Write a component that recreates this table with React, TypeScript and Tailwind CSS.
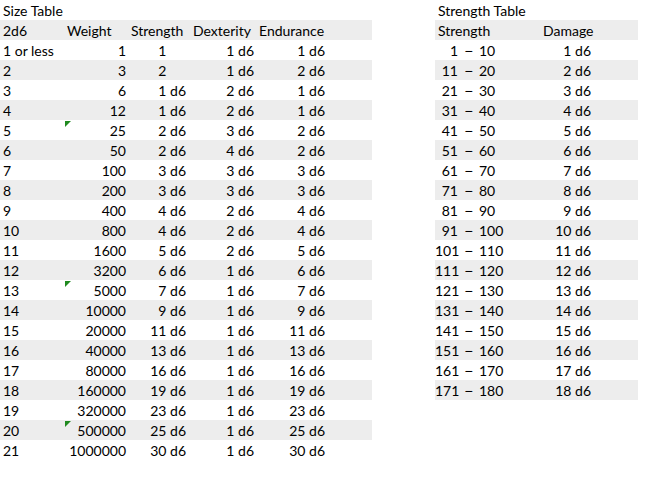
import React from 'react';

type SizeRow = {
  roll: string;
  weight: string;
  strength: string;
  dexterity: string;
  endurance: string;
  flagged?: boolean;
  bareStrength?: boolean;
};

const sizeRows: SizeRow[] = [
  { roll: '1 or less', weight: '1', strength: '1', dexterity: '1', endurance: '1', bareStrength: true },
  { roll: '2', weight: '3', strength: '2', dexterity: '1', endurance: '2', bareStrength: true },
  { roll: '3', weight: '6', strength: '1', dexterity: '2', endurance: '1' },
  { roll: '4', weight: '12', strength: '1', dexterity: '2', endurance: '1' },
  { roll: '5', weight: '25', strength: '2', dexterity: '3', endurance: '2', flagged: true },
  { roll: '6', weight: '50', strength: '2', dexterity: '4', endurance: '2' },
  { roll: '7', weight: '100', strength: '3', dexterity: '3', endurance: '3' },
  { roll: '8', weight: '200', strength: '3', dexterity: '3', endurance: '3' },
  { roll: '9', weight: '400', strength: '4', dexterity: '2', endurance: '4' },
  { roll: '10', weight: '800', strength: '4', dexterity: '2', endurance: '4' },
  { roll: '11', weight: '1600', strength: '5', dexterity: '2', endurance: '5' },
  { roll: '12', weight: '3200', strength: '6', dexterity: '1', endurance: '6' },
  { roll: '13', weight: '5000', strength: '7', dexterity: '1', endurance: '7', flagged: true },
  { roll: '14', weight: '10000', strength: '9', dexterity: '1', endurance: '9' },
  { roll: '15', weight: '20000', strength: '11', dexterity: '1', endurance: '11' },
  { roll: '16', weight: '40000', strength: '13', dexterity: '1', endurance: '13' },
  { roll: '17', weight: '80000', strength: '16', dexterity: '1', endurance: '16' },
  { roll: '18', weight: '160000', strength: '19', dexterity: '1', endurance: '19' },
  { roll: '19', weight: '320000', strength: '23', dexterity: '1', endurance: '23' },
  { roll: '20', weight: '500000', strength: '25', dexterity: '1', endurance: '25', flagged: true },
  { roll: '21', weight: '1000000', strength: '30', dexterity: '1', endurance: '30' },
];

const damageRows = Array.from({ length: 18 }, (_, i) => ({
  low: i * 10 + 1,
  high: i * 10 + 10,
  dice: i + 1,
}));

function Dice({ n, bare }: { n: string | number; bare?: boolean }) {
  return (
    <span className="whitespace-pre">
      {n}
      <span className={bare ? 'invisible' : ''}> d6</span>
    </span>
  );
}

// excel's little "number stored as text" marker
function Flag() {
  return (
    <svg className="absolute left-[1px] top-[1px]" width="6" height="6" viewBox="0 0 6 6">
      <polygon points="0,0 6,0 0,6" fill="#1f8a1f" />
    </svg>
  );
}

function SizeTable() {
  return (
    <div className="w-[372px]">
      <div className="h-5 pl-[3px] leading-[22px]">Size Table</div>
      <div className="flex h-5 bg-[#ededed] leading-[22px]">
        <div className="w-16 pl-[3px]">2d6</div>
        <div className="w-16 pl-[3px]">Weight</div>
        <div className="w-[62px] pl-[3px]">Strength</div>
        <div className="w-[66px] pl-[3px]">Dexterity</div>
        <div className="w-[72px] pl-[3px]">Endurance</div>
      </div>
      {sizeRows.map((row, i) => (
        <div
          key={row.roll}
          className={`flex h-5 leading-[22px] ${i % 2 === 1 ? 'bg-[#ededed]' : ''}`}
        >
          <div className="w-16 pl-[3px]">{row.roll}</div>
          <div className="relative w-16 pr-[2px] text-right">
            {row.flagged && <Flag />}
            {row.weight}
          </div>
          <div className="w-[62px] pr-[4px] text-right">
            <Dice n={row.strength} bare={row.bareStrength} />
          </div>
          <div className="w-[66px] pr-[2px] text-right">
            <Dice n={row.dexterity} />
          </div>
          <div className="w-[72px] pr-[3px] text-right">
            <Dice n={row.endurance} />
          </div>
        </div>
      ))}
    </div>
  );
}

function StrengthTable() {
  return (
    <div className="w-[203px]">
      <div className="h-5 pl-[3px] leading-[22px]">Strength Table</div>
      <div className="flex h-5 bg-[#ededed] leading-[22px]">
        <div className="w-[105px] pl-[3px]">Strength</div>
        <div className="pl-[3px]">Damage</div>
      </div>
      {damageRows.map((row, i) => (
        <div
          key={row.low}
          className={`flex h-5 leading-[22px] ${i % 2 === 1 ? 'bg-[#ededed]' : ''}`}
        >
          <div className="w-[23px] text-right">{row.low}</div>
          <div className="w-[21px] text-center font-['Liberation_Sans',sans-serif]">−</div>
          <div className="w-[61px]">{row.high}</div>
          <div className="w-[51px] text-right">
            <Dice n={row.dice} />
          </div>
        </div>
      ))}
    </div>
  );
}

export default function App() {
  return (
    <div className="flex h-[480px] w-[650px] bg-white font-[Lato,sans-serif] text-[14px] text-black">
      <SizeTable />
      <div className="w-[63px]" />
      <StrengthTable />
    </div>
  );
}
